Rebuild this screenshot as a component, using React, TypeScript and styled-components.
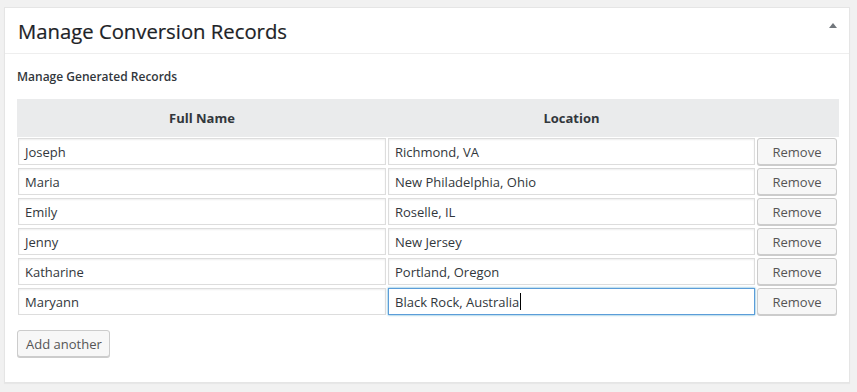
import styled, { createGlobalStyle } from "styled-components";

interface Record {
  name: string;
  location: string;
}

const records: Record[] = [
  { name: "Joseph", location: "Richmond, VA" },
  { name: "Maria", location: "New Philadelphia, Ohio" },
  { name: "Emily", location: "Roselle, IL" },
  { name: "Jenny", location: "New Jersey" },
  { name: "Katharine", location: "Portland, Oregon" },
  { name: "Maryann", location: "Black Rock, Australia" },
];

// the location field of the last row has focus in the screenshot
const focusedRow = records.length - 1;

const App = () => {
  return (
    <>
      <GlobalStyle />
      <Page>
        <Panel>
          <PanelHeader>
            <Title>Manage Conversion Records</Title>
            <ToggleArrow />
          </PanelHeader>
          <PanelBody>
            <SectionLabel>Manage Generated Records</SectionLabel>
            <RecordsGrid>
              <HeaderRow>
                <HeaderCell>Full Name</HeaderCell>
                <HeaderCell>Location</HeaderCell>
                <HeaderCell />
              </HeaderRow>
              {records.map((record, i) => (
                <RecordRow key={record.name}>
                  <Field>{record.name}</Field>
                  <Field $focused={i === focusedRow}>
                    {record.location}
                    {i === focusedRow && <Caret />}
                  </Field>
                  <Button type="button">Remove</Button>
                </RecordRow>
              ))}
            </RecordsGrid>
            <AddButton type="button">Add another</AddButton>
          </PanelBody>
        </Panel>
      </Page>
    </>
  );
};

export default App;

const GlobalStyle = createGlobalStyle`
  html, body {
    margin: 0;
    padding: 0;
    background: #f1f1f1;
  }
  body {
    font-family: "Open Sans", "Noto Sans", sans-serif;
    color: #32373c;
  }
`;

const Page = styled.div`
  padding: 7px 0 9px 4px;
`;

const Panel = styled.section`
  width: 846px;
  box-sizing: border-box;
  background: #fff;
  border: 1px solid #e5e5e5;
  box-shadow: 0 1px 1px rgba(0, 0, 0, 0.04);
`;

const PanelHeader = styled.div`
  display: flex;
  align-items: center;
  height: 45px;
  padding: 0 12px 0 13px;
  border-bottom: 1px solid #eee;
`;

const Title = styled.h2`
  flex: 1;
  margin: 0;
  font-size: 20.3px;
  font-weight: 400;
  color: #1d2327;
  -webkit-text-stroke: 0.2px #1d2327;
`;

const ToggleArrow = styled.span`
  align-self: flex-start;
  margin-top: 15px;
  width: 0;
  height: 0;
  border-left: 4px solid transparent;
  border-right: 4px solid transparent;
  border-bottom: 5px solid #72777c;
`;

const PanelBody = styled.div`
  padding: 13px 10px 25px 12px;
`;

const SectionLabel = styled.div`
  height: 20px;
  line-height: 20px;
  margin-bottom: 12px;
  font-size: 12px;
  font-weight: 600;
  color: #32373c;
`;

const RecordsGrid = styled.div`
  display: flex;
  flex-direction: column;
  gap: 3px;
`;

const Columns = styled.div`
  display: grid;
  grid-template-columns: 368px 367px 80px;
  column-gap: 2px;
  padding: 0 1px;
`;

const HeaderRow = styled(Columns)`
  height: 38px;
  margin-bottom: -2px;
  background: #eaebec;
`;

const HeaderCell = styled.div`
  display: flex;
  align-items: center;
  justify-content: center;
  font-size: 13px;
  font-weight: 700;
  color: #32373c;
`;

const RecordRow = styled(Columns)``;

const Field = styled.div<{ $focused?: boolean }>`
  display: flex;
  align-items: center;
  height: 27px;
  box-sizing: border-box;
  padding: 0 6px;
  background: #fff;
  border: 1px solid ${({ $focused }) => ($focused ? "#5b9dd9" : "#ddd")};
  box-shadow: ${({ $focused }) =>
    $focused ? "0 0 2px rgba(30, 140, 190, 0.8)" : "inset 0 1px 2px rgba(0, 0, 0, 0.07)"};
  font-size: 13px;
  color: #32373c;
  white-space: nowrap;
`;

const Caret = styled.span`
  display: inline-block;
  width: 1px;
  height: 17px;
  margin-left: 1px;
  background: #000;
`;

const Button = styled.button`
  height: 27px;
  padding: 0 8px;
  background: #f7f7f7;
  border: 1px solid #ccc;
  border-radius: 3px;
  box-shadow: 0 1px 0 #ccc;
  font-family: inherit;
  font-size: 13px;
  color: #555;
  white-space: nowrap;
  cursor: pointer;
`;

const AddButton = styled(Button)`
  display: block;
  width: 93px;
  margin-top: 15px;
`;
